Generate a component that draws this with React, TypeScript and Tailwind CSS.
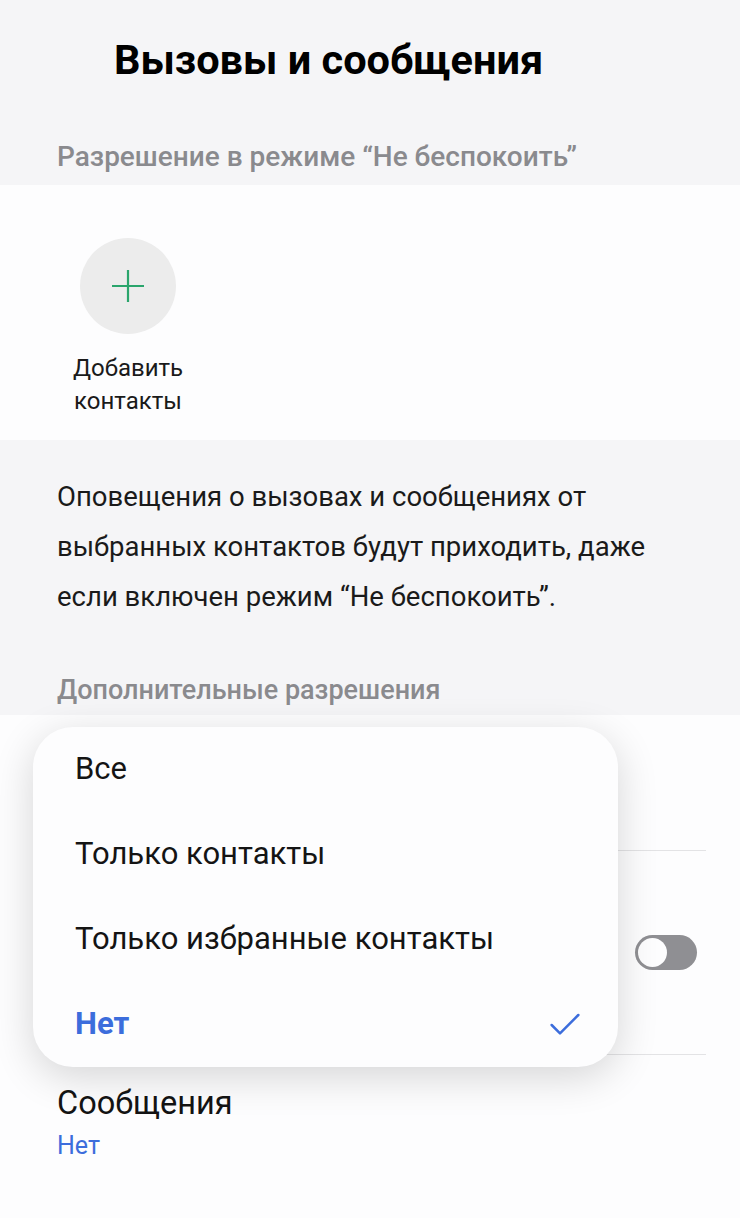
import { Check } from "lucide-react";

const font = "font-['Roboto','Noto_Sans',sans-serif]";

function Toggle() {
  return (
    <div className="mr-[9px] flex h-[35px] w-[62px] items-center rounded-full bg-[#8f8f93] p-[3px]">
      <div className="h-[29px] w-[29px] rounded-full bg-[#fdfdfe]" />
    </div>
  );
}

function Popup() {
  const items = ["Все", "Только контакты", "Только избранные контакты"];
  return (
    <div className="absolute left-[33px] top-[727px] w-[585px] rounded-[40px] bg-[#fdfdfe] shadow-[0_10px_40px_rgba(0,0,0,0.16)]">
      {items.map((item) => (
        <div key={item} className="flex h-[85px] items-center px-[42px] text-[31px] text-[#141414]">
          {item}
        </div>
      ))}
      <div className="flex h-[85px] items-center justify-between pl-[42px] pr-[33px] text-[31px] font-bold text-[#3c6ddc]">
        <span>Нет</span>
        <Check className="h-[40px] w-[40px]" strokeWidth={1.5} />
      </div>
    </div>
  );
}

export default function App() {
  return (
    <div className={`relative flex h-[1218px] w-[740px] flex-col overflow-hidden bg-[#f5f5f7] ${font}`}>
      <div className="h-[120px] pl-[114px] pt-[36px]">
        <h1 className="text-[41.5px] font-bold leading-[48px] text-black">Вызовы и сообщения</h1>
      </div>

      <div className="flex h-[65px] items-end pb-[11px] pl-[57px]">
        <span className="text-[28px] font-medium leading-[34px] text-[#8a8a8e]">
          Разрешение в режиме “Не беспокоить”
        </span>
      </div>

      <div className="h-[255px] bg-[#fdfdfe] pt-[53px]">
        <div className="ml-[58px] flex w-[140px] flex-col items-center">
          <div className="flex h-[96px] w-[96px] items-center justify-center rounded-full bg-[#ececec]">
            <svg width="36" height="36" viewBox="0 0 36 36" fill="none" stroke="#2aa56c" strokeWidth="2.2">
              <path d="M18 2v32M2 18h32" />
            </svg>
          </div>
          <div className="mt-[18px] text-center text-[24px] leading-[33px] text-[#1a1a1a]">
            Добавить
            <br />
            контакты
          </div>
        </div>
      </div>

      <div className="h-[275px] pl-[57px] pr-[30px] pt-[32px]">
        <p className="text-[27.5px] leading-[50px] text-[#1a1a1a]">
          Оповещения о вызовах и сообщениях от
          <br />
          выбранных контактов будут приходить, даже
          <br />
          если включен режим “Не беспокоить”.
        </p>
        <div className="mt-[51px] text-[27px] font-medium leading-[34px] text-[#8a8a8e]">
          Дополнительные разрешения
        </div>
      </div>

      <div className="flex-1 bg-[#fdfdfe] pl-[57px] pr-[34px]">
        {/* rows under the open menu */}
        <div className="h-[136px] border-b border-[#e3e3e5]" />
        <div className="flex h-[204px] items-center justify-end border-b border-[#e3e3e5]">
          <Toggle />
        </div>
        <div className="flex flex-col pt-[28px]">
          <span className="text-[32.5px] leading-[40px] text-[#141414]">Сообщения</span>
          <span className="mt-[7px] text-[25px] leading-[32px] text-[#3c6ddc]">Нет</span>
        </div>
      </div>

      <Popup />
    </div>
  );
}
